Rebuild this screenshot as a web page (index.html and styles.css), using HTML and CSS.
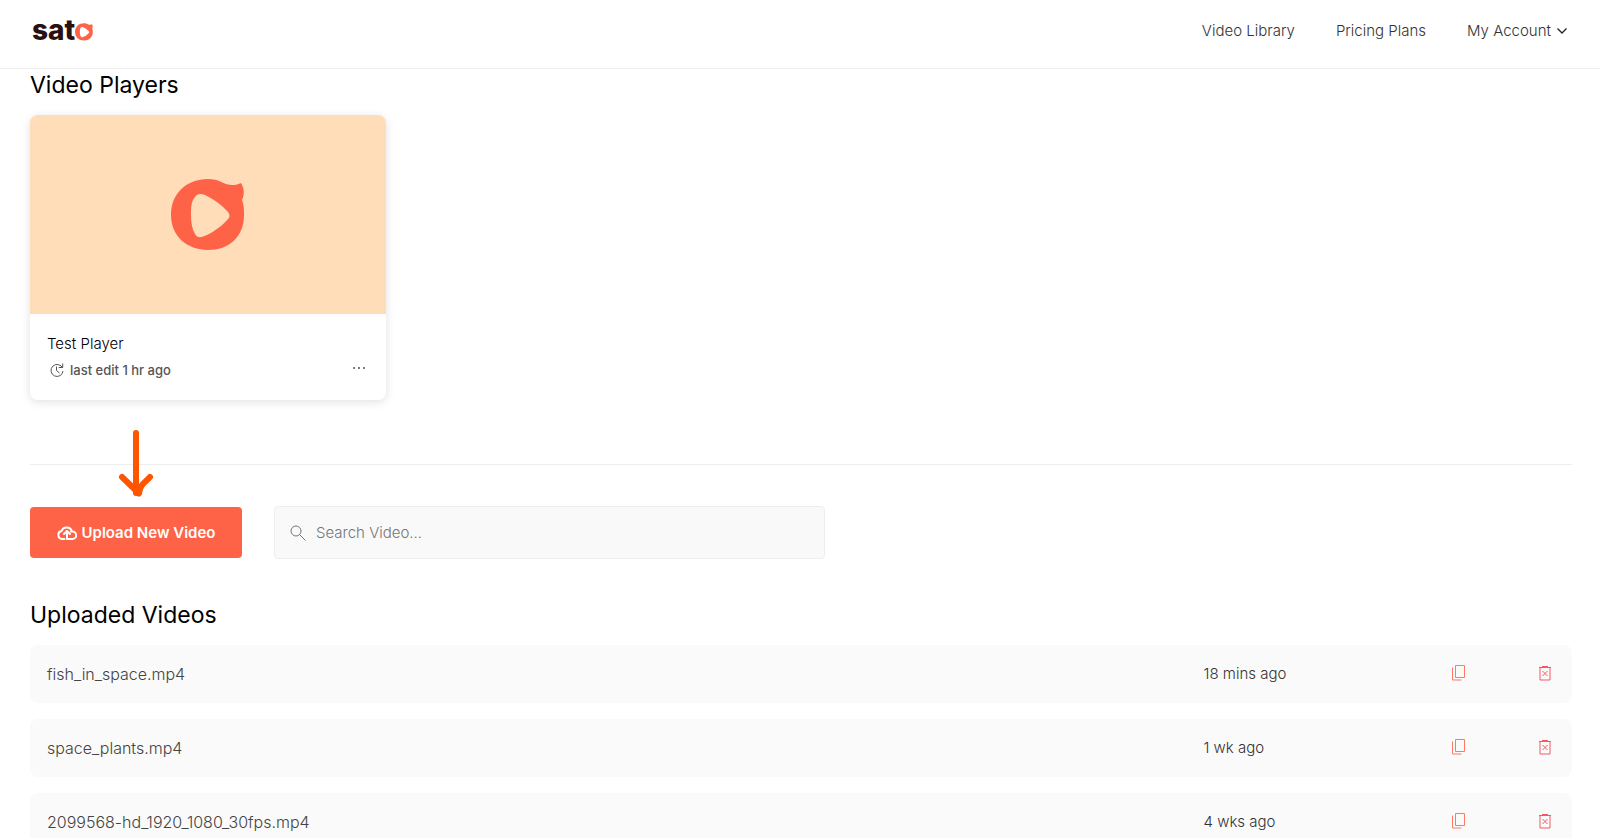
FILE: index.html
```html
<!DOCTYPE html>
<html lang="en">
<head>
<meta charset="utf-8">
<meta name="viewport" content="width=device-width, initial-scale=1">
<title>Sato - Video Library</title>
<link rel="stylesheet" href="styles.css">
</head>
<body>
<svg class="defs" width="0" height="0" aria-hidden="true">
  <symbol id="mark" viewBox="0 0 74 72">
    <path fill-rule="evenodd" d="M37 0C46 0 50 3 55 5C61 7 66 6 70 4C73 9 74 15 71 21C73 26 73 31 73 36C73 58 58 71 37 71C16 71 0 57 0 36C0 14 16 0 37 0ZM24 18C20 22 20 30 20 36C20 43 21 50 24 55C27 60 31 58 36 56C44 52 52 46 57 40C59 38 59 36 57 33C50 25 42 20 34 16C29 14 26 15 24 18Z"/>
  </symbol>
  <symbol id="copy" viewBox="0 0 16 18" fill="none" stroke="currentColor">
    <path d="M4.500 1.500h9v12h-9zM1.500 3.500v12.500h9"/>
  </symbol>
  <symbol id="trash" viewBox="0 0 16 18" fill="none" stroke="currentColor">
    <path d="M2 3.500h12M5 2.500h6M3 3.500v12.500h10v-12.500M5.500 7l5 5M10.500 7l-5 5"/>
  </symbol>
</svg>
<header class="header">
  <a class="logo" href="#"><span>sat</span><svg class="logo-mark"><use href="#mark"/></svg></a>
  <nav class="nav">
    <a href="#">Video Library</a>
    <a href="#">Pricing Plans</a>
    <button class="account" type="button">My Account
      <svg width="12" height="8" viewBox="0 0 12 8" fill="none" stroke="#222" stroke-width="1.300"><path d="M1.500 1.500l4.500 4.500l4.500-4.500"/></svg>
    </button>
  </nav>
</header>
<main class="main">
  <section class="players">
    <h2>Video Players</h2>
    <article class="card">
      <div class="thumb"><svg class="thumb-mark"><use href="#mark"/></svg></div>
      <div class="card-body">
        <h3>Test Player</h3>
        <div class="meta">
          <svg width="16" height="16" viewBox="0 0 16 16" fill="none" stroke="currentColor"><path d="M13.500 6A6 6 0 1 0 14 9M13.700 1.500v4h-4M13.500 5.500L11 3M7.500 4.500v4l3 2.500"/></svg>
          <span>last edit 1 hr ago</span>
          <button class="more" type="button" aria-label="More options">
            <svg width="14" height="4" viewBox="0 0 14 4" fill="currentColor"><circle cx="2" cy="2" r="1"/><circle cx="7" cy="2" r="1"/><circle cx="12" cy="2" r="1"/></svg>
          </button>
        </div>
      </div>
    </article>
  </section>
  <section class="tools">
    <button class="upload" type="button">
      <svg width="20" height="16" viewBox="0 0 20 16" fill="none" stroke="currentColor" stroke-width="2" stroke-linecap="round" stroke-linejoin="round"><path d="M7.500 14H5a4 4 0 0 1-.5-7.900A5.500 5.500 0 0 1 15 6.500M10 14h5.500a3.700 3.700 0 0 0 0-7.400h-1.500M10 14V7M7 9l3-3l3 3"/></svg>
      Upload New Video
    </button>
    <label class="search">
      <svg width="16" height="16" viewBox="0 0 16 16" fill="none" stroke="currentColor"><circle cx="6" cy="6" r="5"/><path d="M9.500 9.500l6 6"/></svg>
      <input type="search" placeholder="Search Video..." aria-label="Search video">
    </label>
    <svg class="arrow" viewBox="0 0 38 72" fill="none" stroke="#ff5500" stroke-width="6" stroke-linecap="round" stroke-linejoin="round"><path d="M18 5v60M4 49L21 65.500C22 56 27 55 32 49"/></svg>
  </section>
  <section class="uploads">
    <h2>Uploaded Videos</h2>
    <table class="videos">
      <tbody>
        <tr>
          <td class="name">fish_in_space.mp4</td><td class="date">18 mins ago</td>
          <td class="copy"><button type="button" aria-label="Copy"><svg width="16" height="18"><use href="#copy"/></svg></button></td>
          <td class="delete"><button type="button" aria-label="Delete"><svg width="16" height="18"><use href="#trash"/></svg></button></td>
        </tr>
        <tr>
          <td class="name">space_plants.mp4</td><td class="date">1 wk ago</td>
          <td class="copy"><button type="button" aria-label="Copy"><svg width="16" height="18"><use href="#copy"/></svg></button></td>
          <td class="delete"><button type="button" aria-label="Delete"><svg width="16" height="18"><use href="#trash"/></svg></button></td>
        </tr>
        <tr>
          <td class="name">2099568-hd_1920_1080_30fps.mp4</td><td class="date">4 wks ago</td>
          <td class="copy"><button type="button" aria-label="Copy"><svg width="16" height="18"><use href="#copy"/></svg></button></td>
          <td class="delete"><button type="button" aria-label="Delete"><svg width="16" height="18"><use href="#trash"/></svg></button></td>
        </tr>
      </tbody>
    </table>
  </section>
</main>
</body>
</html>
```
FILE: styles.css
```css
* { box-sizing: border-box; }
body {
  margin: 0;
  height: 100vh;
  overflow: hidden;
  background: #fff;
  color: #333;
  font: 300 16px/24px Inter, "Liberation Sans", sans-serif;
}
button { border: 0; padding: 0; background: none; color: inherit; font: inherit; cursor: pointer; }
svg { display: block; flex: none; }
a { color: inherit; text-decoration: none; }
h2, h3 { margin: 0; color: #000; font-weight: 400; }
h2 { font-size: 23px; line-height: 32px; }
.defs { position: absolute; }

.header {
  display: flex;
  justify-content: space-between;
  align-items: flex-start;
  height: 69px;
  padding: 18px 32px 0;
  border-bottom: 1px solid #eee;
}
.logo { display: flex; align-items: flex-end; color: #2a1010; font-size: 28px; font-weight: 800; line-height: 24px; }
.logo-mark { width: 18px; height: 18px; margin-bottom: 1px; fill: #ff6347; }
.nav { display: flex; gap: 41px; font-size: 15px; line-height: 26px; }
.account { display: flex; align-items: center; gap: 5px; }

.main { padding: 0 28px 0 30px; }
.card {
  width: 356px;
  margin-top: 14px;
  border-radius: 8px;
  overflow: hidden;
  background: #fff;
  box-shadow: 0 2px 10px rgba(0, 0, 0, .12);
}
.thumb { display: grid; place-items: center; height: 199px; background: #ffddb9; }
.thumb-mark { width: 74px; height: 72px; fill: #ff6347; }
.card-body { padding: 17px; height: 86px; }
.card h3 { font-size: 15px; line-height: 26px; font-weight: 300; }
.meta { display: flex; align-items: center; gap: 5px; padding-left: 2px; font-size: 13px; line-height: 26px; font-weight: 500; color: #555; }
.more { margin-left: auto; padding: 4px 3px 8px; }

.tools {
  position: relative;
  display: flex;
  align-items: center;
  gap: 32px;
  margin-top: 64px;
  padding-top: 41px;
  border-top: 1px solid #eee;
}
.upload {
  display: flex;
  align-items: center;
  justify-content: center;
  gap: 5px;
  width: 212px;
  height: 51px;
  border-radius: 4px;
  background: #ff6347;
  color: #fff;
  font-size: 15px;
  font-weight: 600;
}
.search {
  display: flex;
  align-items: center;
  gap: 10px;
  flex: 0 1 551px;
  height: 53px;
  padding: 0 15px;
  border: 1px solid #eee;
  border-radius: 4px;
  background: #f9f9f9;
  color: #777;
}
.search input { flex: 1; min-width: 0; border: 0; padding: 0; outline: 0; background: none; font: inherit; font-size: 15px; }
.search input::placeholder { color: #757575; }
.arrow { position: absolute; top: -37px; left: 88px; width: 38px; height: 72px; }

.uploads { margin-top: 40px; }
.videos { width: 100%; margin-top: -2px; border-collapse: separate; border-spacing: 0 16px; table-layout: fixed; }
.videos td { height: 58px; padding: 0 17px; background: #fafafa; font-size: 15px; }
.videos td:first-child { border-radius: 8px 0 0 8px; }
.videos td:last-child { border-radius: 0 8px 8px 0; }
.videos .name { width: 75%; color: #444; font-size: 16px; }
.date { width: 16%; }
.videos .copy { padding: 0 18px 3px; color: #ff7a60; }
.videos .delete { width: 52px; padding-bottom: 3px; color: #f45a60; }
.videos button { display: block; }
```
